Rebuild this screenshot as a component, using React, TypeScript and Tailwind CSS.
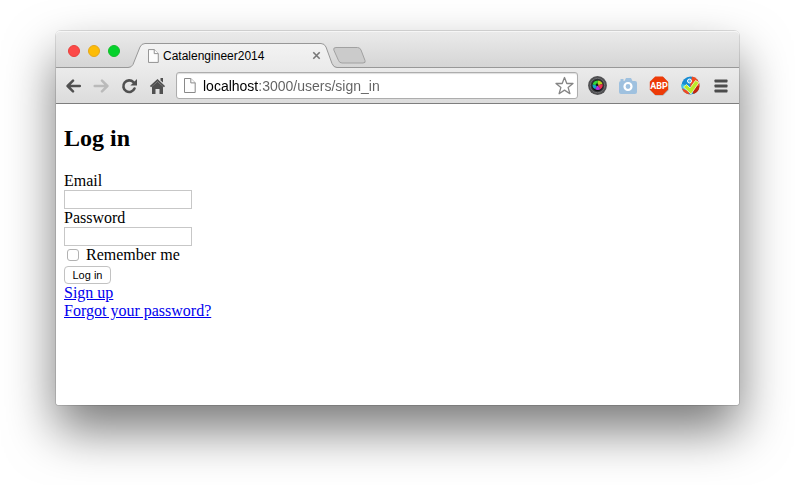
import React from "react";

function PageIcon({ className }: { className: string }) {
  return (
    <svg viewBox="0 0 12 15" className={className} fill="#fdfdfd" stroke="#898989" strokeWidth="1" aria-hidden="true">
      <path d="M.5.5h6.3l4.4 4.4v9.6H.5z" />
      <path d="M6.8.5v4.4h4.4" />
    </svg>
  );
}

function TitleBar() {
  return (
    <header className="flex h-[37px] items-center gap-2 rounded-t-[4px] border-b border-[#989898] bg-gradient-to-b from-[#ebebeb] to-[#d5d5d5] pl-3 shadow-[inset_0_1px_0_#f6f6f6]">
      <div className="flex gap-2 pt-1">
        <button aria-label="Close window" className="size-3 rounded-full border border-[#e8403c] bg-[#fc4948]" />
        <button aria-label="Minimize window" className="size-3 rounded-full border border-[#e5a71a] bg-[#fdbc06]" />
        <button aria-label="Zoom window" className="size-3 rounded-full border border-[#14bd2b] bg-[#05d22c]" />
      </div>
      <div className="relative -mb-px flex h-[25px] w-[209px] shrink-0 items-center self-end pr-4 pl-5">
        <svg viewBox="0 0 209 25" className="absolute inset-0 h-full w-full" aria-hidden="true">
          <defs>
            <linearGradient id="tab" x2="0" y2="1">
              <stop stopColor="#f3f3f3" />
              <stop offset="1" stopColor="#ebebeb" />
            </linearGradient>
          </defs>
          <path d="M0 24.5Q3.500 24.500 5 21.500L12 4Q13.500.500 17 .500H193Q196.500.500 198 4L204 20.500Q205.500 24.500 209 24.500V25H0Z" fill="url(#tab)" />
          <path d="M0 24.500Q3.500 24.500 5 21.500L12 4Q13.500.500 17 .500H193Q196.500.500 198 4L204 20.500Q205.500 24.500 209 24.500" fill="none" stroke="#989898" />
        </svg>
        <PageIcon className="relative h-[14px] w-[11px]" />
        <span className="relative ml-1 flex-1 text-xs leading-4">Catalengineer2014</span>
        <button aria-label="Close tab" className="relative flex size-[9px] items-center justify-center">
          <svg viewBox="0 0 9 9" className="size-[9px]" stroke="#777" strokeWidth="1.6" aria-hidden="true">
            <path d="m1.300 1.300 6.400 6.400m0-6.400L1.300 7.700" />
          </svg>
        </button>
      </div>
      <button aria-label="New tab" className="-ml-3 pt-3">
        <svg viewBox="0 0 33 17" className="h-[17px] w-[33px]" fill="#cbcbcb" stroke="#a1a1a1" aria-hidden="true">
          <path d="M3 .5h21.500q2.500 0 3.500 2.500l4 10.500q1 2.500-2 2.500H9q-2.500 0-3.500-2.500L.8 3Q0 .5 3 .5Z" />
        </svg>
      </button>
    </header>
  );
}

function Toolbar() {
  return (
    <nav className="flex h-9 items-center border-b border-[#7e7e7e] bg-gradient-to-b from-[#ebebeb] to-[#dcdcdc] pr-[11px] pl-[9px]">
      <button aria-label="Back" className="mr-3">
        <svg viewBox="0 0 16 14" className="h-[14px] w-4" fill="none" stroke="#505050" strokeWidth="2.500" strokeLinecap="round" strokeLinejoin="round" aria-hidden="true">
          <path d="M14.800 7H3M8 1.700 2.600 7 8 12.300" />
        </svg>
      </button>
      <button aria-label="Forward" className="mr-3">
        <svg viewBox="0 0 16 14" className="h-[14px] w-4" fill="none" stroke="#bababa" strokeWidth="2.500" strokeLinecap="round" strokeLinejoin="round" aria-hidden="true">
          <path d="M1.700 7h12M9 1.700 14.400 7 9 12.300" />
        </svg>
      </button>
      <button aria-label="Reload" className="mr-3">
        <svg viewBox="0 0 16 16" className="size-4" fill="none" stroke="#505050" strokeWidth="2.600" strokeLinecap="round" aria-hidden="true">
          <path d="M12.400 4.200A5.800 5.800 0 1 0 13.500 10.500" />
          <path d="M16 1v6.600H9.400z" fill="#505050" stroke="none" />
        </svg>
      </button>
      <button aria-label="Home" className="mr-3">
        <svg viewBox="0 0 16 16" className="size-4" aria-hidden="true">
          <path d="M11.500 0h2.500v4.500L11.500 2.500zM3 8.500 8.500 3.500 14 8.500V16h-3.500v-5h-4v5H3z" fill="#505050" />
          <path d="m1.500 8.700 7-6.500 7 6.500" fill="none" stroke="#505050" strokeWidth="1.800" />
        </svg>
      </button>
      <div className="-ml-px flex h-[27px] min-w-0 flex-1 items-center rounded-[3px] border border-[#adadad] bg-white pr-[3px] pl-[7px] shadow-[inset_0_1px_1px_#dedede]">
        <PageIcon className="h-[15px] w-3 shrink-0" />
        <input
          aria-label="Address"
          type="text"
          defaultValue="localhost:3000/users/sign_in"
          className="ml-[7px] min-w-0 flex-1 bg-[linear-gradient(to_right,#000_56px,#606060_56px)] bg-clip-text text-sm text-transparent outline-none"
        />
        <button aria-label="Bookmark this page">
          <svg viewBox="0 0 20 20" className="size-5" fill="#fff" stroke="#858585" strokeWidth="1.300" strokeLinejoin="round" aria-hidden="true">
            <path d="m10.500 1.500 2.300 6h6.200l-4.900 3.900 1.800 6.300-5.400-3.600-5.400 3.600 1.800-6.300-4.900-3.900h6.200z" />
          </svg>
        </button>
      </div>
      <div className="ml-[9px] flex items-center gap-[11px]">
        <button aria-label="Color picker">
          <svg viewBox="0 0 20 20" className="size-5" aria-hidden="true">
            <circle cx="10.500" cy="9.500" r="9.400" fill="#505052" />
            <circle cx="10.500" cy="9.500" r="7.200" fill="#333437" stroke="#79797b" strokeWidth=".8" />
            <circle cx="10.500" cy="9.500" r="5.500" fill="#111" />
            <path d="M10.500 9.500 5.500 8.500Q6.500 4.500 11 4.500Z" fill="#32d638" />
            <path d="m10.500 9.500.5-5q3.500 0 4.500 3.500Z" fill="#b7cf24" />
            <path d="m10.500 9.500 5-1.500q1 3-2 5.300Z" fill="#ef3153" />
            <path d="m10.500 9.500 3 3.800q-3 1.600-5.500-.3Z" fill="#b72ce8" />
            <path d="M10.500 9.500 8 13Q5 11.500 5.500 8.500Z" fill="#12a5c8" />
            <circle cx="10" cy="8.800" r="1.300" fill="#161616" />
          </svg>
        </button>
        <button aria-label="Screenshot">
          <svg viewBox="0 0 20 20" className="size-5" fill="#9fc1df" aria-hidden="true">
            <path d="M2.500 3h3v2h-3zM6.500 5 8 2h5l1.500 3H17q2 0 2 2v9q0 2-2 2H3q-2 0-2-2V7q0-2 2-2z" />
            <circle cx="10" cy="10.500" r="3.500" fill="none" stroke="#fff" strokeWidth="2.200" />
          </svg>
        </button>
        <button aria-label="Ad blocker">
          <svg viewBox="0 0 20 20" className="size-5" aria-hidden="true">
            <path d="M6.500 1h7.800l5.200 5.400v7.800l-5.300 5.300H6.600L1 14V6.400z" fill="#a9a9a9" />
            <path d="M6.200.5h7.600L19 5.800v7.800L13.700 19H6.200L.8 13.600V5.800z" fill="#ed3b08" />
            <text x="10" y="13" textAnchor="middle" fontFamily="Roboto, Liberation Sans, sans-serif" fontWeight="700" fontSize="9" fill="#fff">ABP</text>
          </svg>
        </button>
        <button aria-label="Site checker">
          <svg viewBox="0 0 20 20" className="size-5" aria-hidden="true">
            <circle cx="10.500" cy="9.500" r="9" fill="#168bd2" />
            <path d="M12 .6a9 9 0 0 1 7.500 9.400H10z" fill="#f04b20" />
            <path d="M19.500 10a9 9 0 0 1-6 8.100L10 10z" fill="#c3280d" />
            <path d="M1.600 8a9 9 0 0 0 2.400 8L10 10z" fill="#36c3ee" />
            <path d="M1.900 12.200Q3.500 17.500 9.500 18.500L8 15Z" fill="#ee4a24" />
            <circle cx="9.500" cy="5" r="2" fill="#58b8ee" stroke="#fff" />
            <path d="m3.500 11 3-2.500 3.500 3.500L15.500 4.500l3.500 2L11 18z" fill="#b9ed27" stroke="#f4f9d5" strokeWidth=".8" />
          </svg>
        </button>
        <button aria-label="Menu" className="ml-px">
          <svg viewBox="0 0 14 14" className="ml-[2px] size-[14px]" fill="#4c4c4c" aria-hidden="true">
            <rect x=".5" y=".5" width="13" height="3" rx=".7" />
            <rect x=".5" y="5.500" width="13" height="3" rx=".7" />
            <rect x=".5" y="10.500" width="13" height="3" rx=".7" />
          </svg>
        </button>
      </div>
    </nav>
  );
}

function LoginForm() {
  return (
    <main className="flex-1 rounded-b-[3px] bg-white px-2 py-5 font-['Liberation_Serif','Times_New_Roman',serif] text-base leading-[18px]">
      <h2 className="mb-5 text-2xl leading-7 font-bold">Log in</h2>
      <form onSubmit={(event) => event.preventDefault()}>
        <label htmlFor="email" className="block">Email</label>
        <input id="email" type="email" className="block h-[19px] w-32 border border-[#c7c7c7] bg-white px-1 text-[11px]" />
        <label htmlFor="password" className="block">Password</label>
        <input id="password" type="password" className="block h-[19px] w-32 border border-[#c7c7c7] bg-white px-1 text-[11px]" />
        <div className="flex items-center pl-[3px]">
          <input id="remember" type="checkbox" className="size-3 appearance-none rounded-[3px] border border-[#b2b2b2] bg-white checked:bg-blue-500" />
          <label htmlFor="remember" className="pl-[7px]">Remember me</label>
        </div>
        <button type="submit" className="mt-[2px] block h-[18px] min-w-[47px] rounded-[4px] border border-[#c2c2c2] bg-white px-[7px] font-['Liberation_Sans',Arial,sans-serif] text-[11px] leading-4">Log in</button>
      </form>
      <a href="#sign-up" className="block w-fit text-[#0000ee] underline">Sign up</a>
      <a href="#forgot" className="block w-fit text-[#0000ee] underline">Forgot your password?</a>
    </main>
  );
}

export default function App() {
  return (
    <div className="flex min-h-screen overflow-hidden bg-white px-14 pt-[31px] pb-20 font-['Liberation_Sans',Arial,sans-serif] text-black">
      <div className="flex min-w-0 flex-1 flex-col rounded-t-[5px] rounded-b-[3px] shadow-[0_0_0_1px_rgba(0,0,0,0.12),0_25px_50px_rgba(0,0,0,0.53)]">
        <TitleBar />
        <Toolbar />
        <LoginForm />
      </div>
    </div>
  );
}
